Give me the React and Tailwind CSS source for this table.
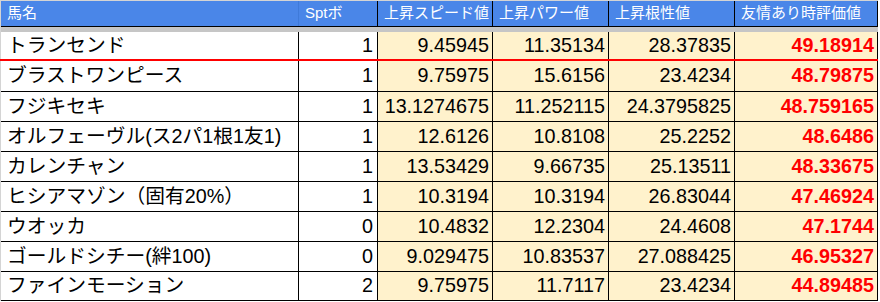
const rows = [
  ["トランセンド", "1", "9.45945", "11.35134", "28.37835", "49.18914"],
  ["ブラストワンピース", "1", "9.75975", "15.6156", "23.4234", "48.79875"],
  ["フジキセキ", "1", "13.1274675", "11.252115", "24.3795825", "48.759165"],
  ["オルフェーヴル(ス2パ1根1友1)", "1", "12.6126", "10.8108", "25.2252", "48.6486"],
  ["カレンチャン", "1", "13.53429", "9.66735", "25.13511", "48.33675"],
  ["ヒシアマゾン（固有20%）", "1", "10.3194", "10.3194", "26.83044", "47.46924"],
  ["ウオッカ", "0", "10.4832", "12.2304", "24.4608", "47.1744"],
  ["ゴールドシチー(絆100)", "0", "9.029475", "10.83537", "27.088425", "46.95327"],
  ["ファインモーション", "2", "9.75975", "11.7117", "23.4234", "44.89485"],
];

const widths = ["w-[298px]", "w-[79px]", "w-[115px]", "w-[116px]", "w-[126px]", "w-[143px]"];
const headers = ["馬名", "Sptボ", "上昇スピード値", "上昇パワー値", "上昇根性値", "友情あり時評価値"];

const Row = ({ r, h, bottom }) => (
  <div className={`flex ${h} ${bottom}`}>
    {r.map((v, i) => (
      <div
        key={i}
        className={`${widths[i]} flex items-center border-r border-black overflow-hidden whitespace-nowrap ${
          i === 0 ? "pl-[6px] bg-white" : i === 1 ? "justify-end pr-[4px] bg-white" : "justify-end pr-[3px] bg-[#fff2cc]"
        } ${i === 5 ? "font-bold text-[#ff0000]" : "text-black"}`}
      >
        {v}
      </div>
    ))}
  </div>
);

export default function App() {
  return (
    <div className="w-[880px] h-[302px] bg-white font-['Liberation_Sans','Noto_Sans_CJK_JP',sans-serif] overflow-hidden">
      <div className="w-[878px] border-t border-l border-[#d4d4d4]">
        <div className="flex h-[26px] bg-[#4a86e8] border-b border-black text-white text-[15px]">
          {headers.map((v, i) => (
            <div
              key={i}
              className={`${widths[i]} flex items-center pl-[6px] border-r ${
                i === 0 ? "border-[#3f7ad9]" : "border-black"
              } whitespace-nowrap`}
            >
              {v}
            </div>
          ))}
        </div>
        <div className="h-[5px] bg-[#c6c6c6]" />
        <div className="text-[19.75px]">
          <Row r={rows[0]} h="h-[27px]" bottom="" />
          <div className="h-[2px] bg-[#ff0000] -ml-px" />
          <Row r={rows[1]} h="h-[31px]" bottom="border-b border-black" />
          {rows.slice(2).map((r, i) => (
            <Row key={i} r={r} h={i === 6 ? "h-[29px]" : "h-[30px]"} bottom="border-b border-black" />
          ))}
        </div>
      </div>
    </div>
  );
}
